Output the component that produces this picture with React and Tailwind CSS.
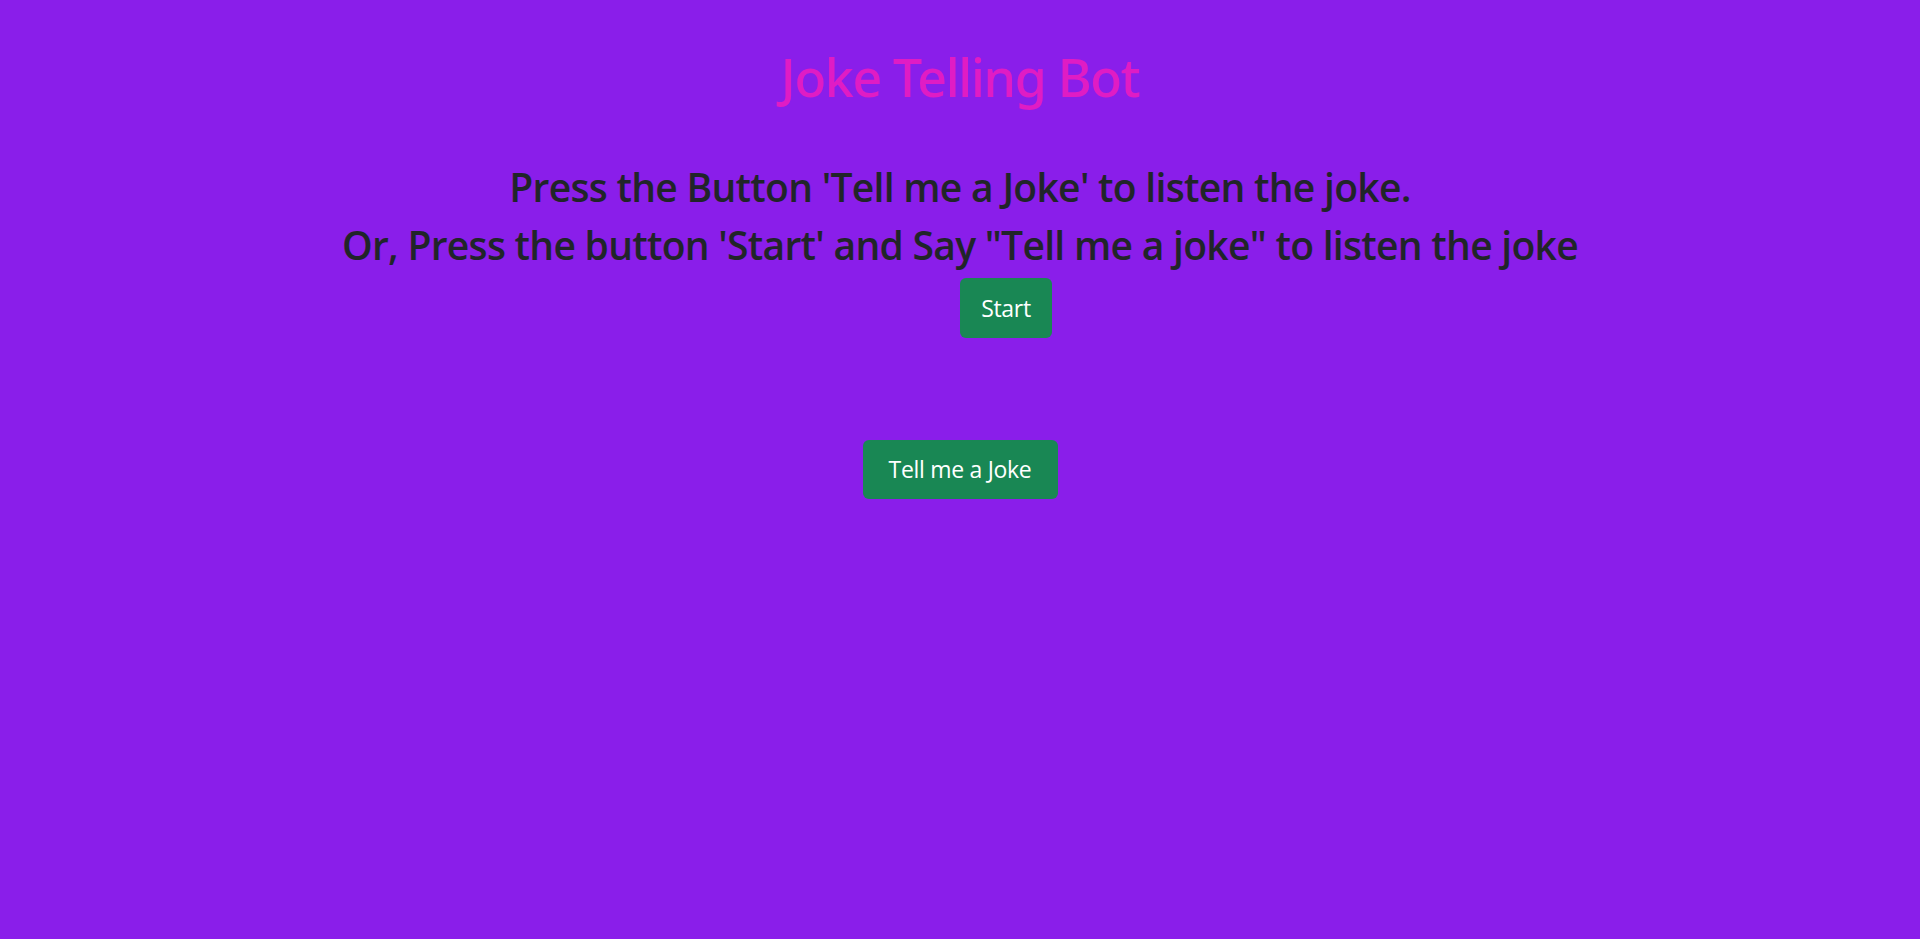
export default function App() {
  return (
    <div className="min-h-[939px] w-full bg-[#8a1eea] text-center" style={{ fontFamily: '"Open Sans", "Noto Sans", sans-serif' }}>
      <div className="pt-[47px]">
        <h1 className="text-[52px] leading-[60px] font-medium tracking-[-1.4px] text-[#e01cc4]" style={{ fontFamily: '"Noto Sans", "Open Sans", sans-serif' }}>Joke Telling Bot</h1>
      </div>
      <div className="mt-[51px] text-[39px] leading-[58px] font-semibold tracking-[-0.7px] text-[#212529]">
        <h2>Press the Button 'Tell me a Joke' to listen the joke.</h2>
        <h2>Or, Press the button 'Start' and Say "Tell me a joke" to listen the joke</h2>
      </div>
      <div className="mt-[4px] flex justify-center">
        <div className="w-[92px]"></div>
        <button className="flex h-[60px] w-[92px] items-center justify-center rounded-[6px] bg-[#198754] text-[23px] tracking-[-0.3px] text-white">Start</button>
      </div>
      <div className="mt-[102px] flex justify-center">
        <button className="flex h-[59px] w-[195px] items-center justify-center rounded-[6px] bg-[#198754] text-[23px] tracking-[-0.3px] text-white">Tell me a Joke</button>
      </div>
    </div>
  );
}
